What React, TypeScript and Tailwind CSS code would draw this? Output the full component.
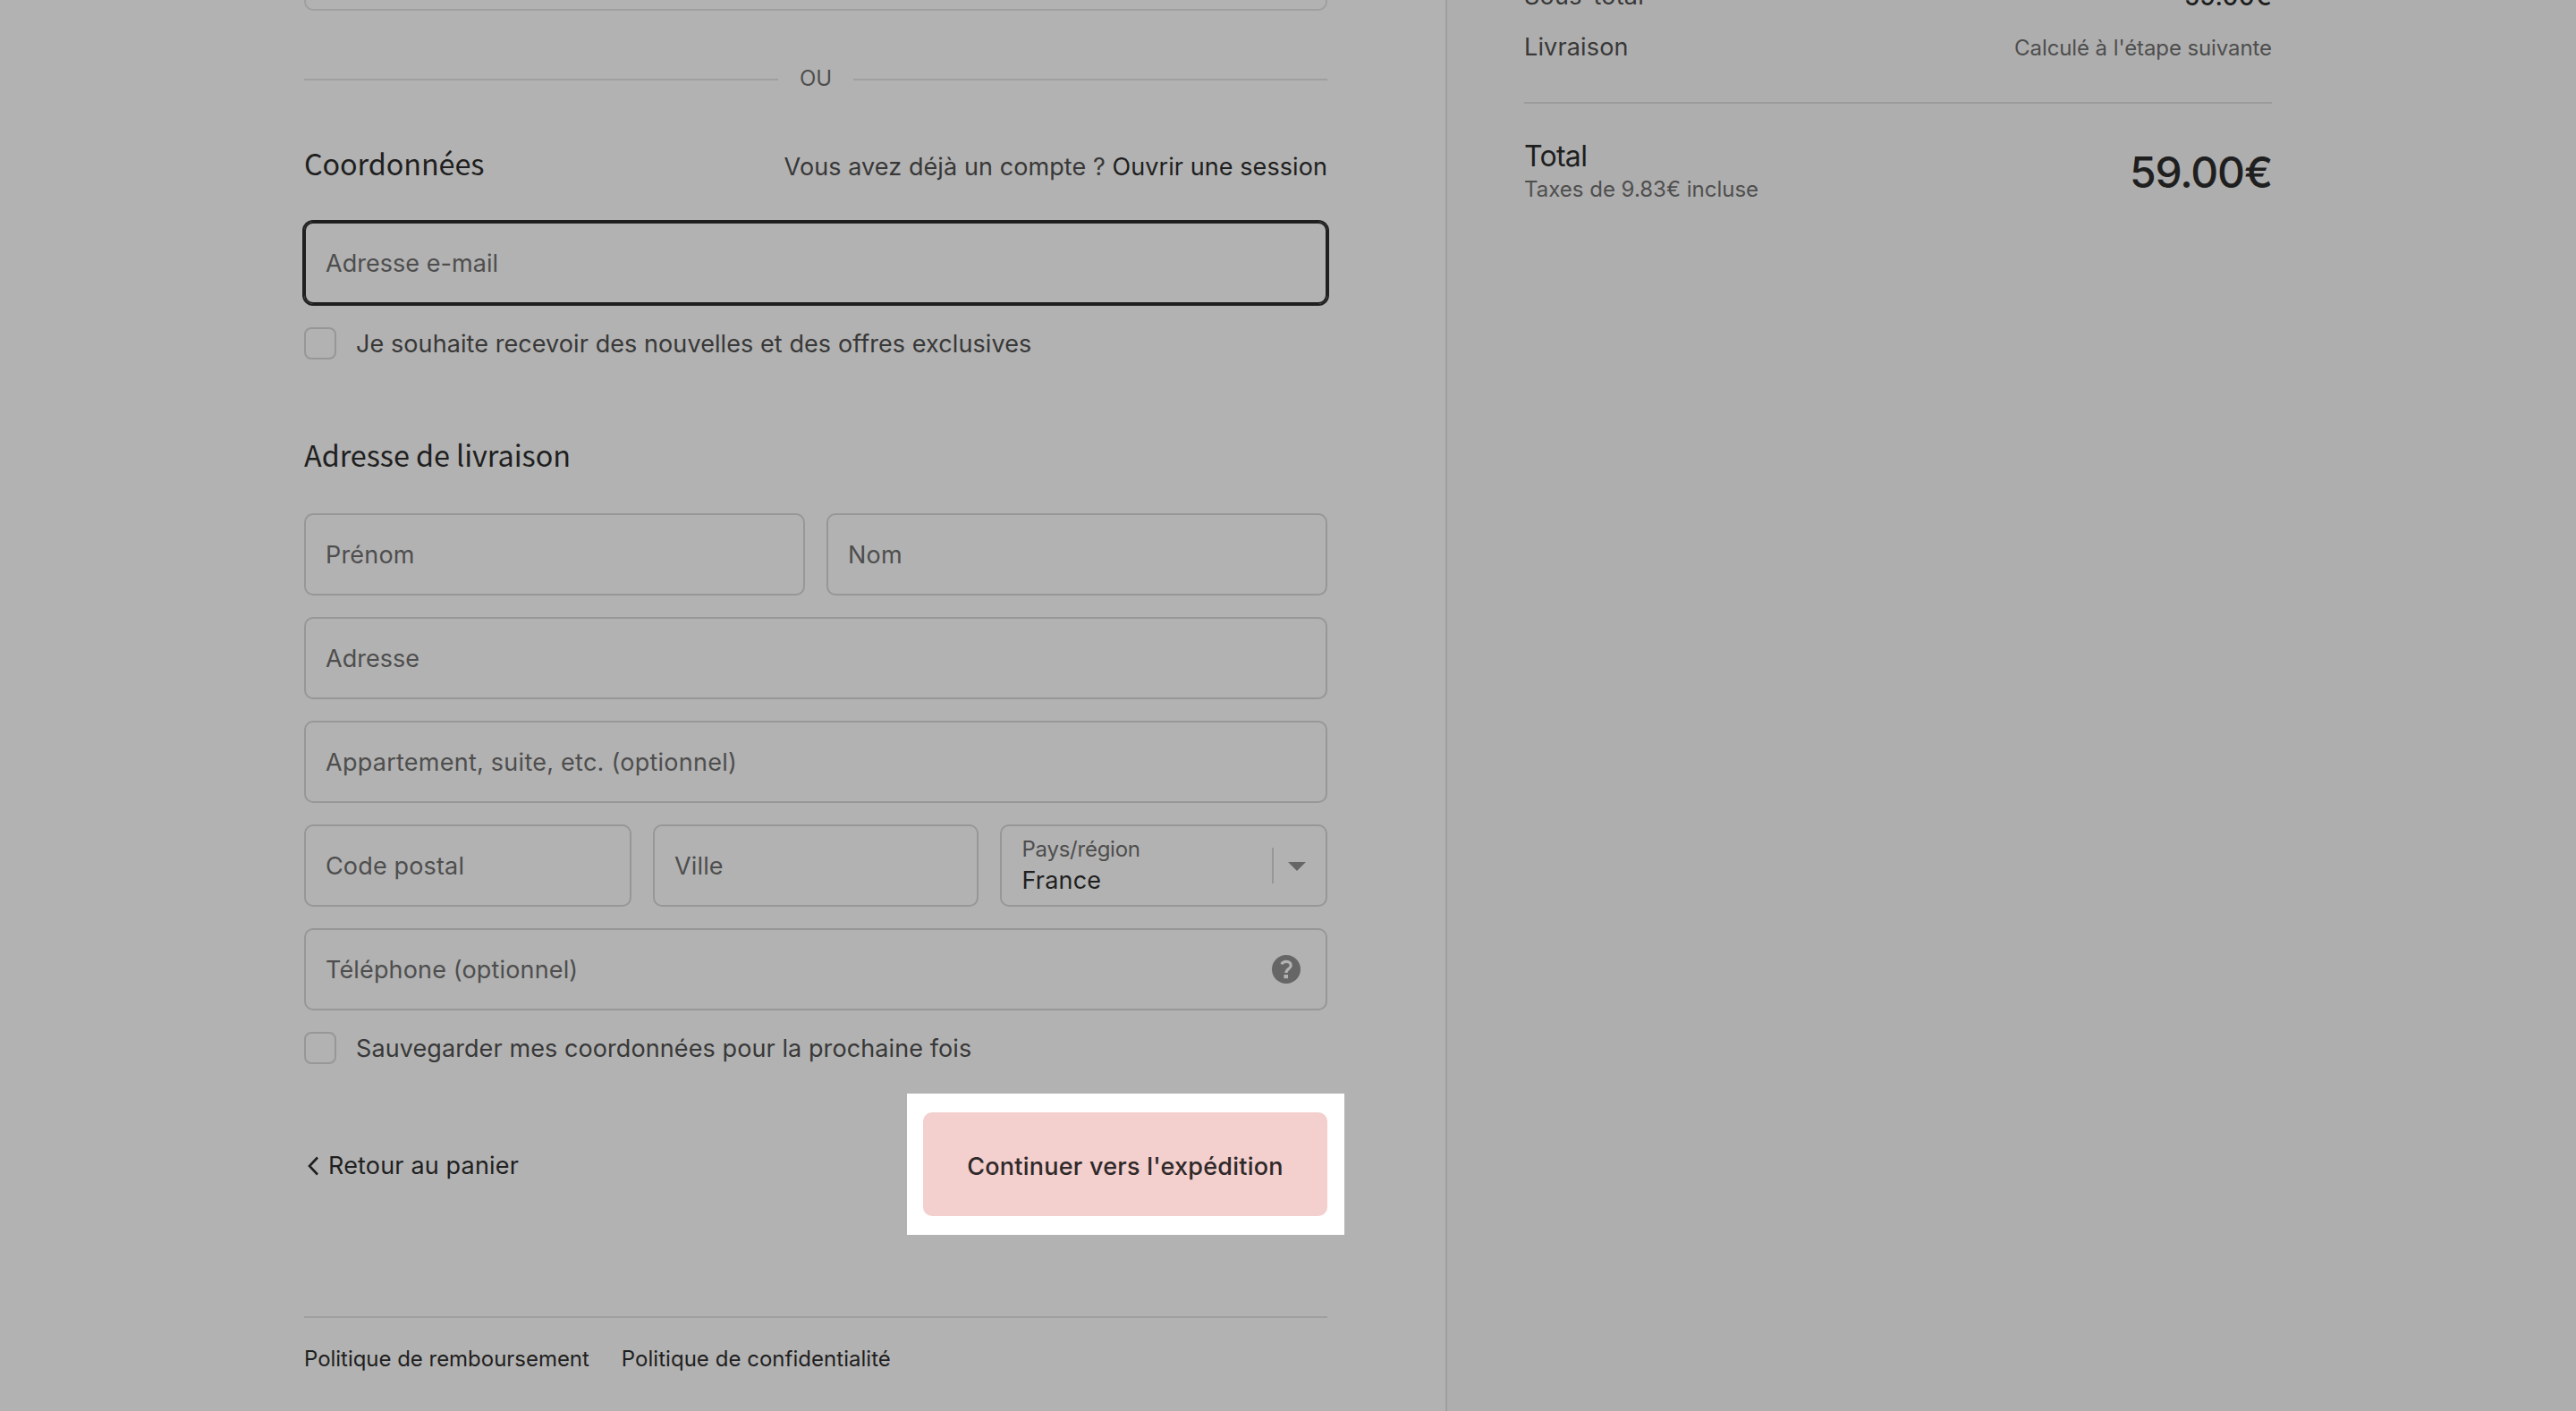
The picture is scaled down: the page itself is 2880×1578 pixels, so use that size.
import type { ReactNode } from 'react';

interface FieldProps {
  label: string;
  focused?: boolean;
  className?: string;
  children?: ReactNode;
}

function Field({ label, focused = false, className = '', children }: FieldProps) {
  const border = focused ? 'border-[#1f1f1f] ring-2 ring-[#1f1f1f]' : 'border-[#979797]';
  return (
    <div
      className={`flex h-[92px] items-center justify-between rounded-[10px] border-2 pl-[22px] pr-7 text-[27px] text-[#4e4e4e] ${border}`}
    >
      <span className={`pt-0.5 ${className}`}>{label}</span>
      {children}
    </div>
  );
}

function Checkbox({ label, className }: { label: string; className: string }) {
  return (
    <div className="flex h-9 items-center gap-[22px]">
      <span className="size-9 rounded-lg border-2 border-[#979797]" />
      <span className={`pt-0.5 text-[27px] text-[#383838] ${className}`}>{label}</span>
    </div>
  );
}

function CountrySelect() {
  return (
    <div className="flex h-[92px] items-center rounded-[10px] border-2 border-[#979797] pl-[22.5px]">
      <div className="flex-1">
        <p className="text-2xl leading-8 tracking-[-0.25px] text-[#4e4e4e]">Pays/région</p>
        <p className="pt-px text-[27px] leading-9 tracking-[0.2px] text-[#1f1f1f]">France</p>
      </div>
      <span className="h-10 w-0.5 bg-[#979797]" />
      <svg className="ml-4 mr-[22px] mt-0.5 h-2.5 w-5" viewBox="0 0 20 10" fill="#666666">
        <path d="M0 0h20L10 10z" />
      </svg>
    </div>
  );
}

function HelpIcon() {
  return (
    <svg className="size-8" viewBox="0 0 32 32" fill="none">
      <circle cx="16" cy="16" r="16" fill="#666666" />
      <path
        d="M10.8 10.2C11.8 8.3 13.6 7.4 16.2 7.4c3 0 5 1.7 5 4.3 0 4-5.3 3.6-5.3 8.4"
        stroke="#b2b2b2"
        strokeWidth="3.2"
      />
      <rect x="13.4" y="22" width="4.6" height="4.2" fill="#b2b2b2" />
    </svg>
  );
}

function CheckoutForm() {
  return (
    <main className="h-full w-[1618px] border-r-2 border-[#9f9f9f] bg-[#b2b2b2] pl-[340px] pr-[132px]">
      {/* Bottom edge of the express checkout box */}
      <div className="h-3 rounded-b-[10px] border-x-2 border-b-2 border-[#9f9f9f]" />

      <div className="mt-[61px] flex h-8 items-center">
        <span className="h-0.5 flex-1 bg-[#9f9f9f]" />
        <span className="w-[84px] pb-0.5 text-center text-2xl text-[#4e4e4e]">OU</span>
        <span className="h-0.5 flex-1 bg-[#9f9f9f]" />
      </div>

      {/* Contact */}
      <div className="mt-[57px] flex h-10 items-baseline justify-between">
        <h2 className="font-['Noto_Sans_CJK_JP',sans-serif] text-[32.4px] leading-10 tracking-[-0.1px] text-[#1f1f1f]">
          Coordonnées
        </h2>
        <p className="text-[27px] leading-10 tracking-[0.08px] text-[#383838]">
          Vous avez déjà un compte ? <a className="text-[#1f1f1f]">Ouvrir une session</a>
        </p>
      </div>
      <div className="mt-[46px] mb-[26px]">
        <Field label="Adresse e-mail" focused className="tracking-[0.04px]" />
      </div>
      <Checkbox
        label="Je souhaite recevoir des nouvelles et des offres exclusives"
        className="tracking-[0.08px]"
      />

      {/* Shipping address */}
      <h2 className="mt-[86px] font-['Noto_Sans_CJK_JP',sans-serif] text-[32.4px] leading-10 tracking-[-0.06px] text-[#1f1f1f]">
        Adresse de livraison
      </h2>
      <div className="mt-[46px] mb-6 grid gap-6">
        <div className="grid grid-cols-2 gap-6">
          <Field label="Prénom" className="tracking-[0.2px]" />
          <Field label="Nom" className="tracking-[0.2px]" />
        </div>
        <Field label="Adresse" className="tracking-[0.04px]" />
        <Field label="Appartement, suite, etc. (optionnel)" className="tracking-[0.254px]" />
        <div className="grid grid-cols-[366px_364px_366px] gap-6">
          <Field label="Code postal" className="tracking-[0.15px]" />
          <Field label="Ville" className="tracking-[0.15px]" />
          <CountrySelect />
        </div>
        <Field label="Téléphone (optionnel)" className="tracking-[0.15px]">
          <HelpIcon />
        </Field>
      </div>
      <Checkbox label="Sauvegarder mes coordonnées pour la prochaine fois" className="tracking-[0.09px]" />

      {/* Actions */}
      <div className="mt-[33px] -mr-[19px] flex h-[158px] items-center justify-between">
        <a className="flex items-center pt-1 text-[27px] tracking-[0.17px] text-[#1f1f1f]">
          <svg className="mr-[9px] ml-1 h-[22px] w-3.5" viewBox="0 0 14 22" fill="none">
            <path d="M11 1.5L2 11l9 9.5" stroke="#1f1f1f" strokeWidth="2.6" />
          </svg>
          Retour au panier
        </a>
        <div className="flex h-[158px] w-[489px] items-center bg-white pl-[18px]">
          <button className="h-[116px] w-[452px] rounded-[10px] bg-[#f3cfce] pt-1.5 text-[27px] font-medium tracking-[0.237px] text-[#2f2929]">
            Continuer vers l'expédition
          </button>
        </div>
      </div>

      <footer className="mt-[91px] flex gap-9 border-t-2 border-[#9f9f9f] pt-[30px] text-2xl leading-8 text-[#1f1f1f]">
        <a className="tracking-[-0.03px]">Politique de remboursement</a>
        <a className="tracking-[0.03px]">Politique de confidentialité</a>
      </footer>
    </main>
  );
}

function OrderSummary() {
  return (
    <aside className="h-full flex-1 overflow-hidden bg-[#aeaeae] pl-[86px]">
      <div className="w-[836px]">
        <div className="-mt-5 flex h-8 justify-between leading-8">
          <span className="text-[27px] tracking-[0.25px] text-[#383838]">Sous-total</span>
          <span className="text-[28px] font-medium tracking-[0.184px] text-[#1f1f1f]">59.00€</span>
        </div>
        <div className="mt-[25px] flex h-8 items-baseline justify-between">
          <span className="text-[27px] leading-8 tracking-[0.15px] text-[#383838]">Livraison</span>
          <span className="text-2xl leading-8 tracking-[-0.094px] text-[#4e4e4e]">Calculé à l'étape suivante</span>
        </div>
        <div className="mt-[45px] flex items-start justify-between border-t-2 border-[#9b9b9b] pt-[39px]">
          <div>
            <p className="text-[32px] leading-10 tracking-[-0.7px] text-[#1f1f1f]">Total</p>
            <p className="mt-px text-2xl leading-8 text-[#4e4e4e]">Taxes de 9.83€ incluse</p>
          </div>
          <p className="mt-3.5 text-5xl leading-[48px] font-medium tracking-[-1.17px] text-[#1f1f1f]">59.00€</p>
        </div>
      </div>
    </aside>
  );
}

function App() {
  return (
    <div className="flex h-[1578px] w-[2880px] overflow-hidden font-['Inter',sans-serif]">
      <CheckoutForm />
      <OrderSummary />
    </div>
  );
}

export default App;
